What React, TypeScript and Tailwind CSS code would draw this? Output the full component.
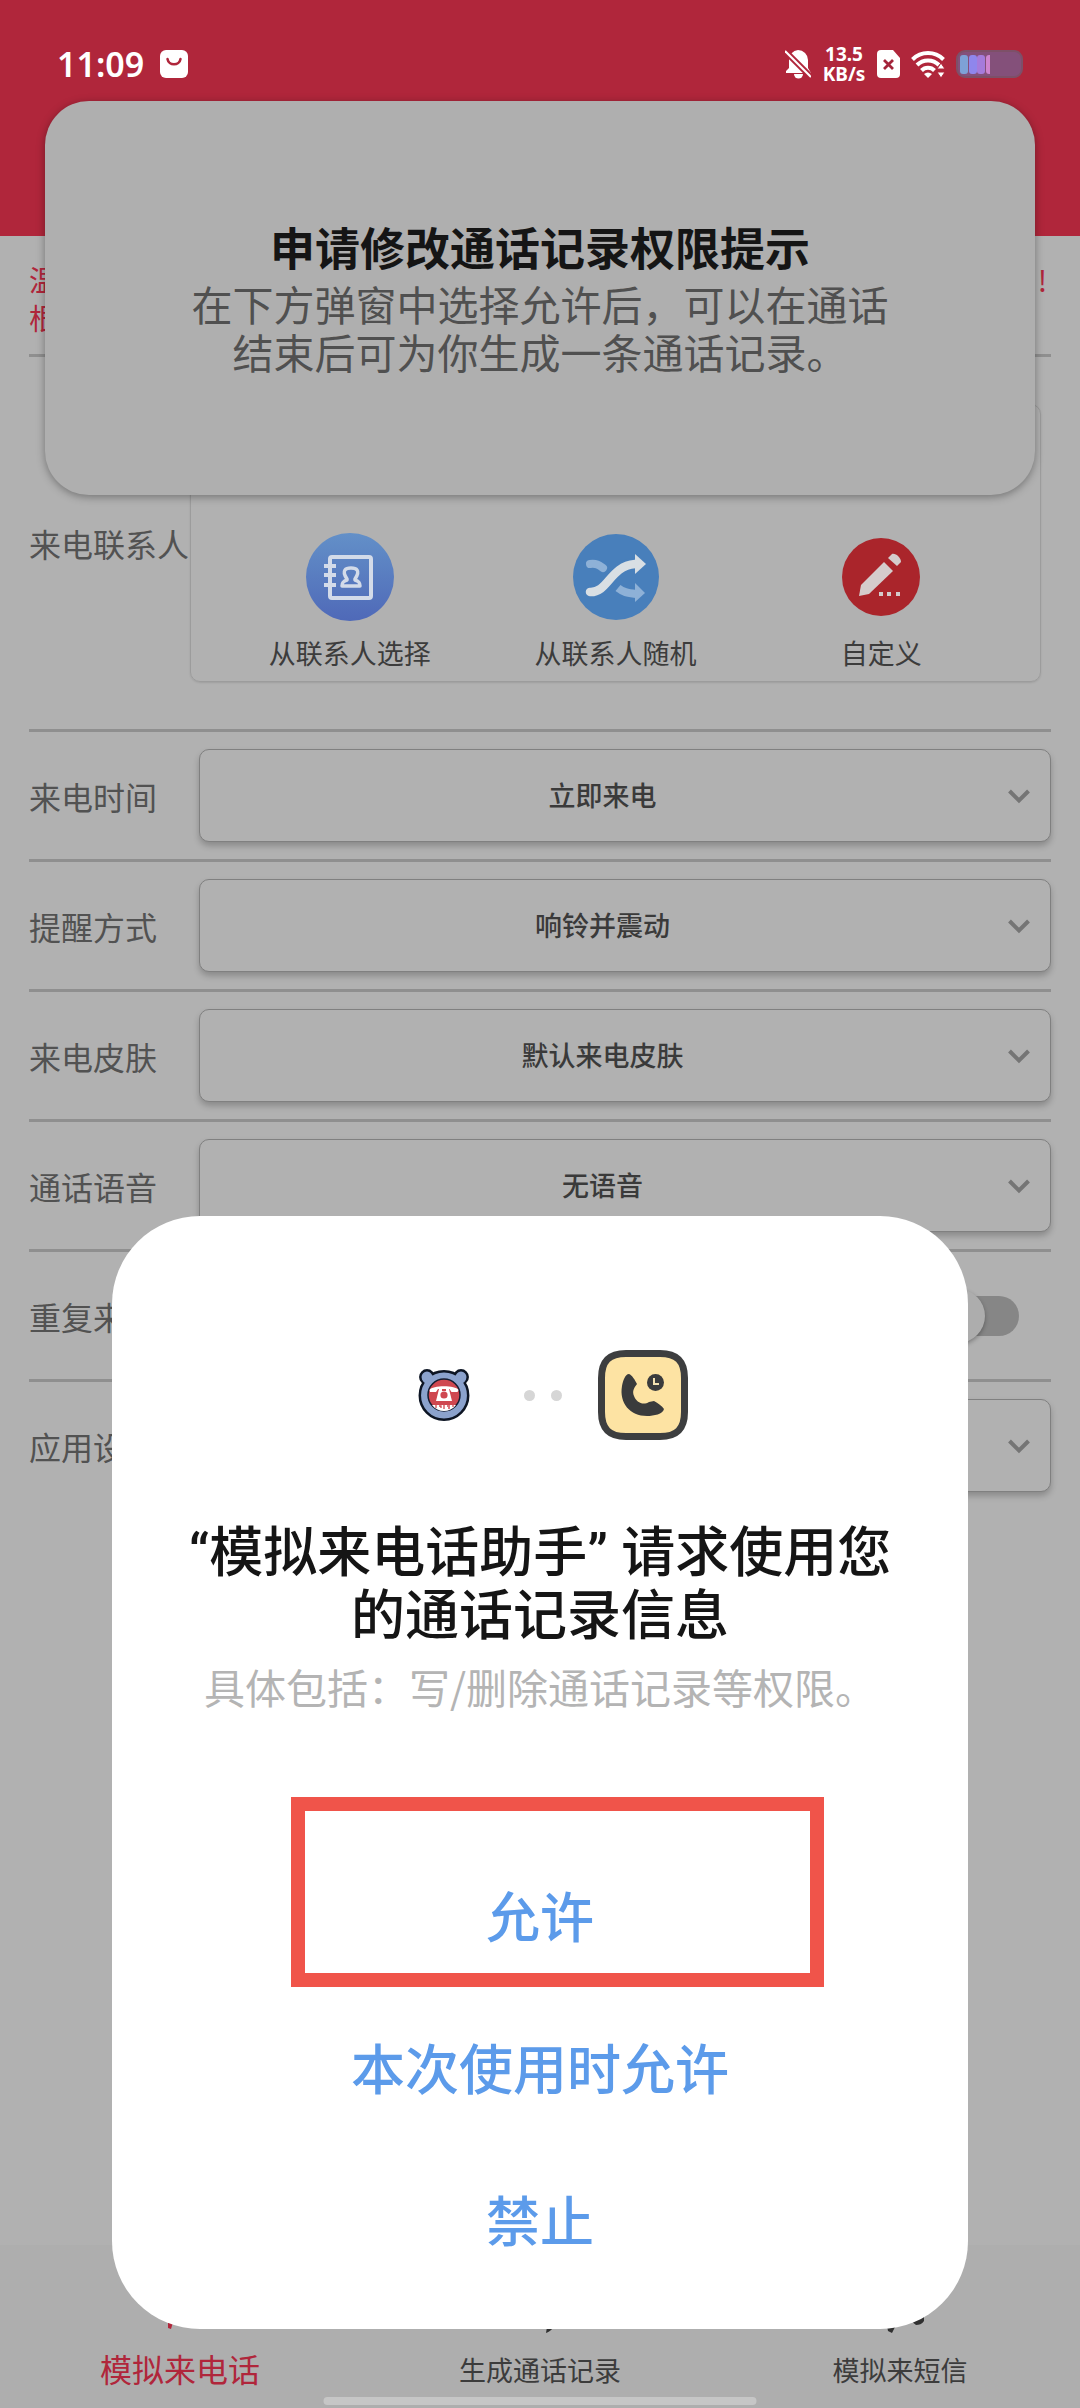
import { useState } from "react";

const rows = [
  { id: "time", label: "来电时间", options: ["立即来电"] },
  { id: "remind", label: "提醒方式", options: ["响铃并震动"] },
  { id: "skin", label: "来电皮肤", options: ["默认来电皮肤"] },
  { id: "voice", label: "通话语音", options: ["无语音"] },
];

const StatusBar = () => (
  <div className="flex h-[128px] items-center justify-between px-[57px] text-white">
    <div className="flex items-center gap-4 font-['Noto_Sans']">
      <span className="text-[34px] leading-none font-semibold">11:09</span>
      <svg width="28" height="28" viewBox="0 0 28 28">
        <rect width="28" height="28" rx="6" fill="#fff" />
        <path d="M7.500 9c1 7 12 7 13 0" fill="none" stroke="#b0263b" strokeWidth="2.500" strokeLinecap="round" />
      </svg>
    </div>
    <div className="flex items-center gap-[11px]">
      <svg width="26" height="30" viewBox="0 0 26 30" fill="#fff">
        <path d="M13 1a10 10 0 0 1 10 10v8l3 5H1v-2l3-3v-8a10 10 0 0 1 9-10z" />
        <path d="M9 25h9a4.500 4.500 0 0 1-9 0z" />
        <path d="M-1 1l28 28" stroke="#b0263b" strokeWidth="6" />
        <path d="M0 2l26 26" stroke="#fff" strokeWidth="2.200" />
      </svg>
      <p className="w-[44px] text-center font-['Noto_Sans'] text-[19px] leading-[20px] font-bold">
        13.5
        <br />
        KB/s
      </p>
      <svg width="23" height="28" viewBox="0 0 23 28">
        <path d="M4 0h12l7 8v16a4 4 0 0 1-4 4H4a4 4 0 0 1-4-4V4a4 4 0 0 1 4-4z" fill="#fff" />
        <path d="M7 10l9 9M16 10l-9 9" stroke="#a3243a" strokeWidth="2.800" />
      </svg>
      <svg width="34" height="28" viewBox="0 0 34 28">
        <g fill="none" stroke="#fff" strokeWidth="4">
          <path d="M1.500 9.500a22 22 0 0 1 31 0" />
          <path d="M6 15a15.500 15.500 0 0 1 22 0" />
          <path d="M10.500 20.500a9 9 0 0 1 13 0" />
        </g>
        <path d="M13 24a6 6 0 0 1 8 0l-4 4z" fill="#fff" />
        <path d="M30 13l4 6h-8zM30 28l4-6h-8z" fill="#fff" stroke="#b0263b" strokeWidth="1" />
      </svg>
      <svg width="67" height="28" viewBox="0 0 67 28">
        <rect x="1" y="1" width="65" height="26" rx="8" fill="#84507a" stroke="#7d5068" strokeWidth="2" />
        <rect x="4" y="5" width="8" height="19" rx="3" fill="#7ea1d6" />
        <rect x="13" y="5" width="8" height="19" rx="3" fill="#8f86ec" />
        <rect x="21" y="5" width="8" height="19" rx="3" fill="#a57bdb" />
        <path d="M34 5v19h-1a3 3 0 0 1-3-3V8a3 3 0 0 1 3-3z" fill="#cf85cf" />
      </svg>
    </div>
  </div>
);

const ContactsIcon = () => (
  <svg width="88" height="88" viewBox="0 0 88 88">
    <defs>
      <linearGradient id="contacts" x1="0" y1="0" x2="0" y2="1">
        <stop offset="0" stopColor="#6390c8" />
        <stop offset="1" stopColor="#4f69b8" />
      </linearGradient>
    </defs>
    <circle cx="44" cy="44" r="44" fill="url(#contacts)" />
    <g fill="none" stroke="#d3dbe9" strokeWidth="4" strokeLinejoin="round">
      <rect x="24" y="24" width="41" height="41" rx="2" />
      <path d="M18 33h12M18 42h12M18 52h12" />
      <path strokeWidth="3.500" d="M41 46c-6-9-1-11 4-11s10 2 4 11l0 1c3 1 5 2 5 6H36c0-4 2-5 5-6z" />
    </g>
  </svg>
);

const ShuffleIcon = () => (
  <svg width="86" height="86" viewBox="0 0 86 86">
    <circle cx="43" cy="43" r="43" fill="#487fbb" />
    <path d="M17 30c6-1 9 1 13 4" fill="none" stroke="#8eb1d7" strokeWidth="8" strokeLinecap="round" />
    <path d="M45 54c5 4 9 5 18 6" fill="none" stroke="#8eb1d7" strokeWidth="8" />
    <path d="M62 49l10 10-10 9z" fill="#8eb1d7" />
    <path d="M17 58c18 1 20-26 45-28" fill="none" stroke="#487fbb" strokeWidth="13" />
    <path d="M17 58c18 1 20-26 45-28" fill="none" stroke="#d9dfe4" strokeWidth="8.500" strokeLinecap="round" />
    <path d="M62 20l11 10-11 10z" fill="#d9dfe4" />
  </svg>
);

const PencilIcon = () => (
  <svg width="78" height="78" viewBox="0 0 78 78">
    <circle cx="39" cy="39" r="39" fill="#aa252b" />
    <path d="M42 24l9 9-24 23-10 2 2-11z" fill="#d5cccc" />
    <path d="M46 20l4-4c4-1 9 4 9 8l-4 4z" fill="#d5cccc" />
    <path d="M37 54h4v4h-4zM45 54h4v4h-4zM54 54h4v4h-4z" fill="#d5cccc" />
  </svg>
);

const contacts = [
  { label: "从联系人选择", Icon: ContactsIcon },
  { label: "从联系人随机", Icon: ShuffleIcon },
  { label: "自定义", Icon: PencilIcon },
];

const BearIcon = () => (
  <svg width="52" height="52" viewBox="0 0 52 52">
    <g fill="#8ba2cd" stroke="#0d1524" strokeWidth="2.500">
      <circle cx="9" cy="8" r="6.700" />
      <circle cx="43" cy="8" r="6.700" />
      <circle cx="26" cy="26.500" r="24.200" />
    </g>
    <circle cx="9.500" cy="9" r="5.500" fill="#8ba2cd" />
    <circle cx="42.500" cy="9" r="5.500" fill="#8ba2cd" />
    <circle cx="26" cy="26" r="16" fill="#cf4750" stroke="#141c30" strokeWidth="1.500" />
    <path d="M11.500 21c3-5 26-5 29 0l-1 2h-6l-2-3H20l-2 3h-6z" fill="#fff" />
    <path d="M21 20h3v2h4v-2h3l3 12H18z" fill="#fff" />
    <circle cx="26" cy="26" r="3.600" fill="#cf4750" />
    <path d="M14 36h24c-6 8-18 8-24 0z" fill="#fff" />
    <path d="M18 36v3M21 37h2v2M26 36v4M29 37h3M30 39h2M35 36v2" stroke="#cf4750" strokeWidth="1.300" fill="none" />
  </svg>
);

const CallLogIcon = () => (
  <svg width="90" height="90" viewBox="0 0 90 90">
    <path
      d="M28 3.500h34c17 0 24.500 7.500 24.500 24.500v34c0 17-7.500 24.500-24.500 24.500H28C11 86.500 3.500 79 3.500 62V28C3.500 11 11 3.500 28 3.500z"
      fill="#fde3a3"
      stroke="#3d3e3f"
      strokeWidth="7"
    />
    <path
      d="M31 24c3 1 6 6 8 10-3 4-5 7-3 12 2 6 9 10 15 6l5-1c4 2 8 5 10 8-1 5-10 7-17 7-17 0-28-13-25-30 1-5 3-12 7-12z"
      fill="#3a3b3c"
    />
    <circle cx="57.500" cy="32.500" r="8.500" fill="#3a3b3c" />
    <path d="M56 28v6h5" fill="none" stroke="#f3e1b1" strokeWidth="2" />
  </svg>
);

const Chevron = () => (
  <svg
    className="pointer-events-none absolute top-1/2 right-5 -translate-y-1/2"
    width="24"
    height="18"
    viewBox="0 0 24 18"
  >
    <path d="M2.500 4L12 13.500 21.500 4" fill="none" stroke="#757575" strokeWidth="4" />
  </svg>
);

const SelectRow = ({ id, label, options }: { id: string; label: string; options: string[] }) => (
  <div className="flex h-[130px] items-center border-t-3 border-[#8f8f8f]">
    <label htmlFor={id} className="w-[170px] shrink-0 text-[32px] whitespace-nowrap text-[#525252]">
      {label}
    </label>
    <div className="relative flex-1">
      <select
        id={id}
        className="h-[93px] w-full appearance-none rounded-[10px] border border-[#808080] bg-[#b1b1b1] pr-[45px] text-center text-[27px] font-medium text-[#3a3a3a] shadow-[0_4px_6px_rgba(0,0,0,0.22)] [text-align-last:center]"
      >
        {options.map((option) => (
          <option key={option}>{option}</option>
        ))}
      </select>
      <Chevron />
    </div>
  </div>
);

const App = () => {
  const [repeat, setRepeat] = useState(false);

  return (
    <div className="relative flex min-h-screen flex-col overflow-hidden bg-[#b1b1b1] font-['Noto_Sans_CJK_SC',sans-serif]">
      <header className="h-[236px] bg-[#b0263b]">
        <StatusBar />
      </header>

      <main className="flex-1 px-[29px]">
        <div className="flex h-[118px] justify-between pt-6 text-[29px] leading-[38px] text-[#b0263b]">
          <p>
            温馨提示
            <br />
            根据提示
          </p>
          <span className="pr-1">!</span>
        </div>

        <section className="flex h-[375px] items-center border-t-3 border-[#8f8f8f]">
          <h2 className="w-[161px] shrink-0 text-[32px] whitespace-nowrap text-[#525252]">来电联系人</h2>
          <div className="mr-[10px] flex h-[278px] flex-1 items-end rounded-[10px] border border-[#9c9c9c] px-[26px] shadow-[0_1px_2px_rgba(0,0,0,0.1)]">
            {contacts.map(({ label, Icon }) => (
              <button key={label} type="button" className="flex flex-1 flex-col items-center pb-[6px]">
                <span className="flex h-[88px] items-center">
                  <Icon />
                </span>
                <span className="mt-[10px] text-[27px] leading-[44px] text-[#3c3c3c]">{label}</span>
              </button>
            ))}
          </div>
        </section>

        {rows.map((row) => (
          <SelectRow key={row.id} {...row} />
        ))}

        <div className="flex h-[130px] items-center justify-between border-t-3 border-[#8f8f8f] pr-8">
          <label htmlFor="repeat" className="text-[32px] text-[#525252]">
            重复来电
          </label>
          <span className="relative flex h-[54px] w-[88px] items-center">
            <input
              id="repeat"
              type="checkbox"
              checked={repeat}
              onChange={() => setRepeat(!repeat)}
              className="peer h-10 w-full appearance-none rounded-full bg-[#868686]"
            />
            <span className="pointer-events-none absolute left-0 size-[54px] rounded-full bg-[#adadad] shadow-[0_2px_4px_rgba(0,0,0,0.3)] peer-checked:left-[34px]" />
          </span>
        </div>

        <SelectRow id="settings" label="应用设置" options={[""]} />
      </main>

      <nav className="grid h-[163px] grid-cols-3 bg-[#aeaeae] pt-[34px] text-[27px] text-[#3c3c3c]">
        <a href="#call" className="flex flex-col items-center text-[32px] text-[#b0263b]">
          <svg width="56" height="56" viewBox="0 0 56 56" fill="currentColor">
            <path d="M10 6l12-2 6 14-6 6c2 6 6 8 10 10l8-6 12 6-2 10c-10 4-20 2-28-4l-3 10-3-1V36C8 26 6 14 10 6z" />
          </svg>
          <span className="leading-[66px]">模拟来电话</span>
        </a>
        <a href="#log" className="flex flex-col items-center">
          <svg width="56" height="56" viewBox="0 0 56 56" fill="#303030">
            <path d="M8 4h40v38H44c-1 6-5 10-10 12l2-12H8z" />
          </svg>
          <span className="leading-[70px]">生成通话记录</span>
        </a>
        <a href="#sms" className="flex flex-col items-center">
          <svg width="56" height="56" viewBox="0 0 56 56" fill="#303030">
            <path d="M4 4h48v38c-2 3-5 4-8 4l-5-4H26l-6 12-4-2-2-10H4z" />
          </svg>
          <span className="leading-[70px]">模拟来短信</span>
        </a>
      </nav>

      <aside className="absolute inset-x-[45px] top-[101px] rounded-[44px] bg-[#afafaf] pt-[116px] pb-[120px] text-center shadow-[0_2px_8px_rgba(0,0,0,0.35)]">
        <h3 className="text-[45px] leading-[60px] font-bold text-[#151515]">申请修改通话记录权限提示</h3>
        <p className="mx-auto mt-[2px] w-[700px] text-[41px] leading-[48px] text-[#505050]">
          在下方弹窗中选择允许后，可以在通话结束后可为你生成一条通话记录。
        </p>
      </aside>

      <section
        role="dialog"
        aria-labelledby="permission-title"
        className="absolute inset-x-[112px] bottom-[79px] flex flex-col items-center rounded-[88px] bg-white pt-[134px] pb-[34px] text-center"
      >
        <div className="flex items-center pl-[26px]">
          <BearIcon />
          <div className="ml-[54px] flex gap-4">
            <span className="size-[11px] rounded-full bg-[#d6d6d6]" />
            <span className="size-[11px] rounded-full bg-[#d6d6d6]" />
          </div>
          <div className="ml-9">
            <CallLogIcon />
          </div>
        </div>
        <h1
          id="permission-title"
          className="mt-[82px] font-[Roboto,'Noto_Sans_CJK_SC',sans-serif] text-[54px] leading-[63px] font-medium text-[#151515]"
        >
          “模拟来电话助手” 请求使用您
          <br />
          的通话记录信息
        </h1>
        <p className="mt-2 text-[41px] leading-[60px] text-[#b4b4b4]">
          具体包括：写/删除通话记录等权限。
        </p>
        <div className="mt-[123px] flex w-full flex-col text-[54px] leading-[152px] font-medium text-[#5c9bea]">
          <button type="button">允许</button>
          <button type="button">本次使用时允许</button>
          <button type="button">禁止</button>
        </div>
        <div className="pointer-events-none absolute top-[581px] right-[144px] left-[179px] h-[190px] border-[14px] border-[#f0544a]" />
      </section>

      <div className="absolute bottom-[3px] left-1/2 h-2 w-[433px] -translate-x-1/2 rounded-full bg-[#c6c6c6]" />
    </div>
  );
};

export default App;
